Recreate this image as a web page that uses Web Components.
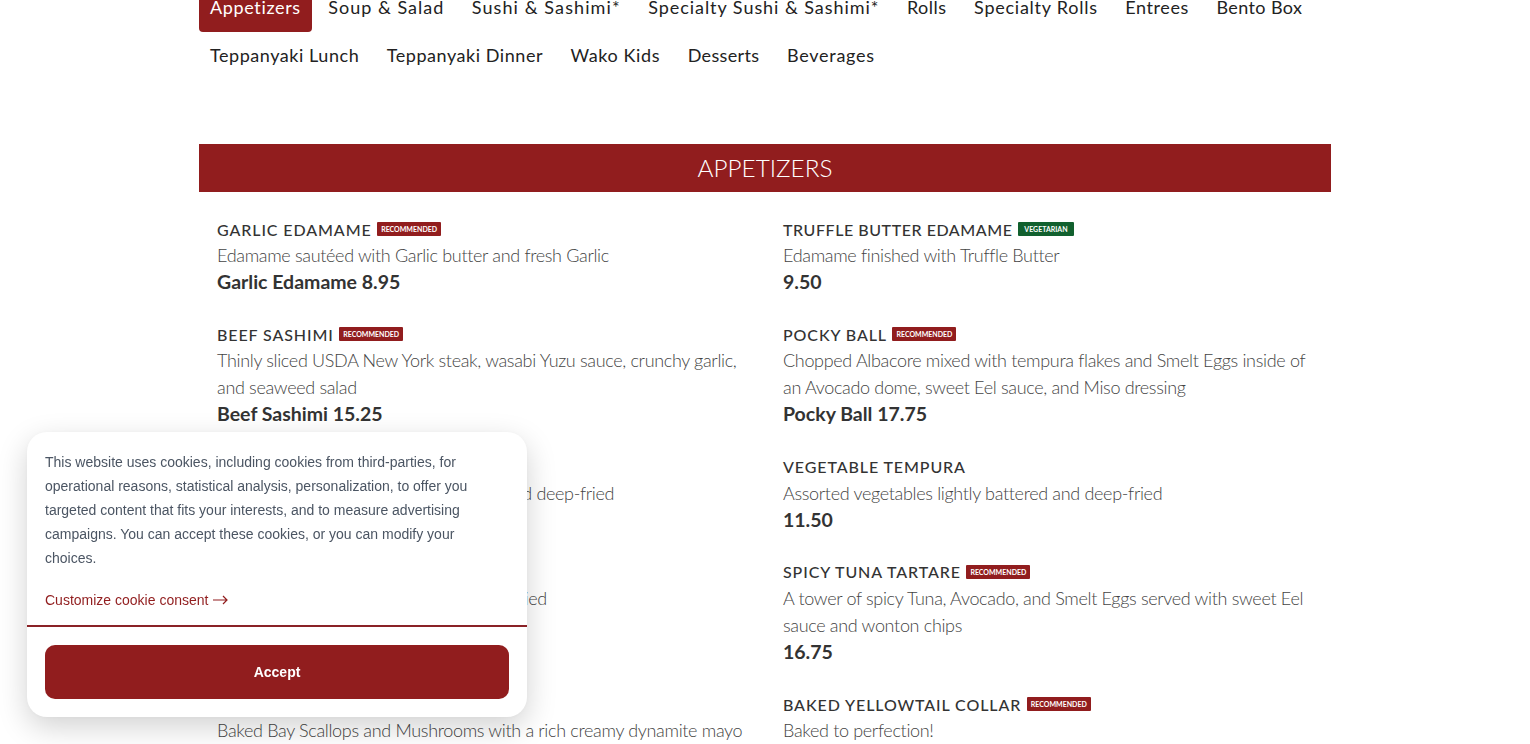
<!DOCTYPE html>
<html>
<head>
<meta charset="utf-8">
<title>Appetizers</title>
<style>
  html, body { margin: 0; height: 744px; overflow: hidden; background: #fff; }
  body { font-family: "Lato", "Open Sans", sans-serif; }
  .page { width: 1132px; margin: -16px auto 0; }
</style>
</head>
<body>
<div class="page">
  <menu-nav>
    <nav-tab active style="--track:.65px">Appetizers</nav-tab>
    <nav-tab style="--track:1px">Soup &amp; Salad</nav-tab>
    <nav-tab style="--track:1.1px">Sushi &amp; Sashimi*</nav-tab>
    <nav-tab style="--track:.95px">Specialty Sushi &amp; Sashimi*</nav-tab>
    <nav-tab style="--track:.5px">Rolls</nav-tab>
    <nav-tab style="--track:.75px">Specialty Rolls</nav-tab>
    <nav-tab style="--track:.6px">Entrees</nav-tab>
    <nav-tab style="--track:.4px">Bento Box</nav-tab>
    <nav-tab style="--track:.55px">Teppanyaki Lunch</nav-tab>
    <nav-tab style="--track:.55px">Teppanyaki Dinner</nav-tab>
    <nav-tab style="--track:.6px">Wako Kids</nav-tab>
    <nav-tab style="--track:.35px">Desserts</nav-tab>
    <nav-tab style="--track:.75px">Beverages</nav-tab>
  </menu-nav>

  <menu-section heading="APPETIZERS">
    <menu-item name="Garlic Edamame" badge="recommended" price="Garlic Edamame 8.95">Edamame sautéed with Garlic butter and fresh Garlic</menu-item>
    <menu-item name="Truffle Butter Edamame" badge="vegetarian" price="9.50" style="--name-track:.55px">Edamame finished with Truffle Butter</menu-item>
    <menu-item name="Beef Sashimi" badge="recommended" price="Beef Sashimi 15.25">Thinly sliced USDA New York steak, wasabi Yuzu sauce, crunchy garlic, and seaweed salad</menu-item>
    <menu-item name="Pocky Ball" badge="recommended" price="Pocky Ball 17.75">Chopped Albacore mixed with tempura flakes and Smelt Eggs inside of an Avocado dome, sweet Eel sauce, and Miso dressing</menu-item>
    <menu-item name="Shrimp Tempura" price="13.50">Shrimp and vegetables lightly battered and deep-fried</menu-item>
    <menu-item name="Vegetable Tempura" price="11.50">Assorted vegetables lightly battered and deep-fried</menu-item>
    <menu-item name="Soft Shell Crab" price="15.50">Soft Shell Crab lightly floured and deep-fried</menu-item>
    <menu-item name="Spicy Tuna Tartare" badge="recommended" price="16.75">A tower of spicy Tuna, Avocado, and Smelt Eggs served with sweet Eel sauce and wonton chips</menu-item>
    <menu-item name="Baked Scallops">Baked Bay Scallops and Mushrooms with a rich creamy dynamite mayo</menu-item>
    <menu-item name="Baked Yellowtail Collar" badge="recommended">Baked to perfection!</menu-item>
  </menu-section>
</div>

<cookie-banner></cookie-banner>

<script>
// nav
class MenuNav extends HTMLElement {
  constructor() {
    super();
    this.attachShadow({ mode: "open" }).innerHTML = `
      <style>
        :host { display: flex; flex-wrap: wrap; column-gap: 5.5px; margin-bottom: 64px; }
      </style>
      <slot></slot>`;
  }
}

class NavTab extends HTMLElement {
  constructor() {
    super();
    this.attachShadow({ mode: "open" }).innerHTML = `
      <style>
        :host {
          display: block;
          height: 48px;
          line-height: 47px;
          padding: 0 11px;
          font-family: "Lato", sans-serif;
          font-size: 18px;
          letter-spacing: var(--track, .85px);
          color: #222;
          border-radius: 0 0 4px 4px;
        }
        :host([active]) { background: #911d1e; color: #fff; }
      </style>
      <slot></slot>`;
  }
}

// section with the red bar and the two columns
class MenuSection extends HTMLElement {
  constructor() {
    super();
    this.attachShadow({ mode: "open" }).innerHTML = `
      <style>
        :host { display: block; }
        h2 {
          margin: 0;
          height: 48px;
          line-height: 47px;
          text-align: center;
          background: #911d1e;
          color: #fff;
          font-family: "Lato", sans-serif;
          font-size: 24.3px;
          font-weight: 300;
        }
        .grid {
          display: grid;
          grid-template-columns: 1fr 1fr;
          padding-top: 25px;
        }
      </style>
      <h2></h2>
      <div class="grid"><slot></slot></div>`;
    this.shadowRoot.querySelector("h2").textContent = this.getAttribute("heading");
  }
}

class MenuItem extends HTMLElement {
  constructor() {
    super();
    this.attachShadow({ mode: "open" }).innerHTML = `
      <style>
        :host {
          display: block;
          padding: 0 18px 27.3px;
          font-family: "Lato", sans-serif;
          color: #333;
        }
        .name {
          display: flex;
          align-items: center;
          gap: 5.5px;
          height: 25px;
          margin-top: -0.5px;
          margin-bottom: 0.5px;
          font-size: 16px;
          font-weight: 500;
          letter-spacing: var(--name-track, .9px);
          text-transform: uppercase;
        }
        .desc { font-size: 18px; font-weight: 300; line-height: 27px; letter-spacing: -0.33px; color: #444; }
        .price { font-size: 19.5px; font-weight: 700; line-height: 26px; min-height: 26px; }
      </style>
      <div class="name"><span class="title"></span></div>
      <div class="desc"><slot></slot></div>
      <div class="price"></div>`;
    const root = this.shadowRoot;
    root.querySelector(".title").textContent = this.getAttribute("name");
    root.querySelector(".price").textContent = this.getAttribute("price") || "";
    const badge = this.getAttribute("badge");
    if (badge) {
      const el = document.createElement("tag-badge");
      el.setAttribute("kind", badge);
      el.textContent = badge;
      root.querySelector(".name").appendChild(el);
    }
  }
}

class TagBadge extends HTMLElement {
  constructor() {
    super();
    this.attachShadow({ mode: "open" }).innerHTML = `
      <style>
        :host {
          display: inline-block;
          width: 64px;
          height: 14px;
          line-height: 14px;
          text-align: center;
          background: #911d1e;
          color: #fff;
          border-radius: 1px;
          font-family: "Lato", sans-serif;
          font-size: 7px;
          font-weight: 700;
          letter-spacing: 0;
        }
        :host([kind="vegetarian"]) { width: 56px; background: #11602e; }
      </style>
      <slot></slot>`;
  }
}

// cookie notice, lies over the page
class CookieBanner extends HTMLElement {
  constructor() {
    super();
    this.attachShadow({ mode: "open" }).innerHTML = `
      <style>
        :host {
          position: fixed;
          left: 27px;
          bottom: 27px;
          width: 500px;
          background: #fff;
          border-radius: 20px;
          box-shadow: 0 10px 30px rgba(0,0,0,0.18), 0 0 6px rgba(0,0,0,0.03);
          font-family: "Liberation Sans", Arial, sans-serif;
          font-size: 14px;
          line-height: 24px;
          color: #4b5563;
        }
        .body { padding: 18px 18px 13px; border-bottom: 2px solid #8a2226; }
        p { margin: 0 0 18px; }
        a { display: inline-flex; align-items: center; gap: 5px; color: #911d1e; text-decoration: none; }
        .actions { padding: 18px; }
        button {
          display: block;
          width: 100%;
          height: 54px;
          border: 0;
          border-radius: 10px;
          background: #911d1e;
          color: #fff;
          font: bold 14px "Liberation Sans", Arial, sans-serif;
        }
      </style>
      <div class="body">
        <p>This website uses cookies, including cookies from third-parties, for operational reasons, statistical analysis, personalization, to offer you targeted content that fits your interests, and to measure advertising campaigns. You can accept these cookies, or you can modify your choices.</p>
        <a href="#">Customize cookie consent
          <svg width="15" height="10" viewBox="0 0 15 10" fill="none" stroke="#911d1e" stroke-width="1.2"><path d="M0 5h14M10 1l4 4-4 4"/></svg>
        </a>
      </div>
      <div class="actions"><button>Accept</button></div>`;
  }
}

customElements.define("menu-nav", MenuNav);
customElements.define("nav-tab", NavTab);
customElements.define("menu-section", MenuSection);
customElements.define("menu-item", MenuItem);
customElements.define("tag-badge", TagBadge);
customElements.define("cookie-banner", CookieBanner);
</script>
</body>
</html>
